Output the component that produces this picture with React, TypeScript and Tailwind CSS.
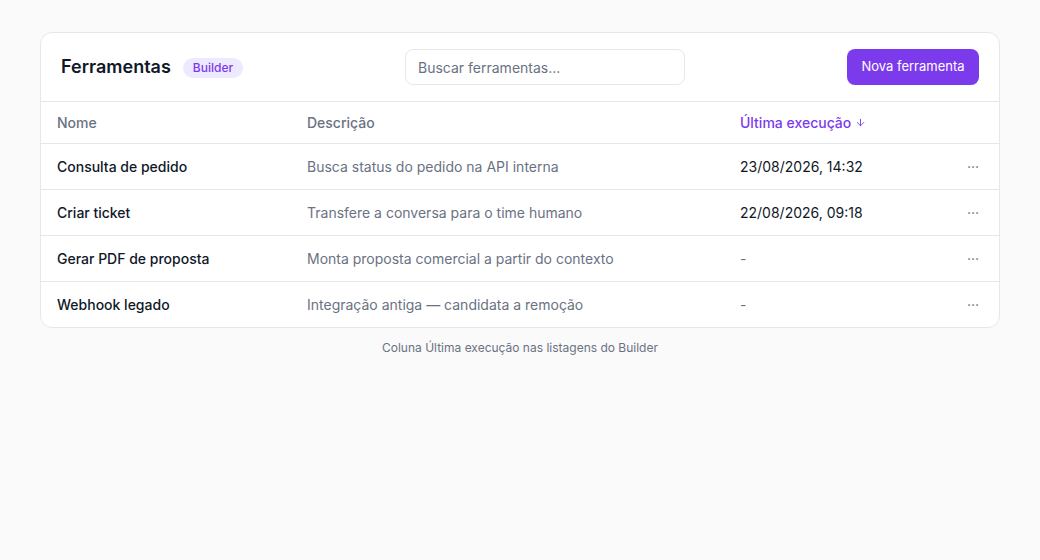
import { ArrowDown } from "lucide-react"

type Tool = {
  name: string
  description: string
  lastRun: string | null
}

const tools: Tool[] = [
  {
    name: "Consulta de pedido",
    description: "Busca status do pedido na API interna",
    lastRun: "23/08/2026, 14:32",
  },
  {
    name: "Criar ticket",
    description: "Transfere a conversa para o time humano",
    lastRun: "22/08/2026, 09:18",
  },
  {
    name: "Gerar PDF de proposta",
    description: "Monta proposta comercial a partir do contexto",
    lastRun: null,
  },
  {
    name: "Webhook legado",
    description: "Integração antiga — candidata a remoção",
    lastRun: null,
  },
]

const cols = "grid grid-cols-[250px_433px_1fr_64px] items-center"

export default function App() {
  return (
    <div className="min-h-screen bg-[#fafafa] px-10 pt-8 font-['Inter',sans-serif] text-gray-900">
      <div className="overflow-hidden rounded-xl border border-gray-200 bg-white">
        <div className="flex items-center justify-between border-b border-gray-200 px-5 py-4">
          <div className="flex items-center gap-3">
            <h1 className="text-lg font-semibold text-gray-900">
              Ferramentas
            </h1>

            <span className="mt-0.5 rounded-full bg-[#ede9fe] px-2.5 py-0.5 text-xs font-medium text-[#7c3aed]">
              Builder
            </span>
          </div>

          <input
            placeholder="Buscar ferramentas..."
            className="h-9 w-[280px] rounded-lg border border-gray-200 bg-white px-3 text-sm text-gray-900 placeholder:text-gray-500 outline-none"
          />

          <button className="h-9 w-[132px] rounded-lg bg-[#7c3aed] text-[13px] text-white">
            Nova ferramenta
          </button>
        </div>

        <div className={`${cols} h-[42px] border-b border-gray-200 text-sm font-medium text-gray-500`}>
          <div className="pl-4">Nome</div>
          <div className="pl-4">Descrição</div>
          <div className="flex items-center gap-1 pl-4 text-[#7c3aed]">
            Última execução
            <ArrowDown size={11} strokeWidth={2} />
          </div>
          <div />
        </div>

        {tools.map((tool, i) => (
          <div
            key={tool.name}
            className={`${cols} text-sm ${
              i < tools.length - 1
                ? "h-[46px] border-b border-gray-200"
                : "h-[45px]"
            }`}
          >
            <div className="pl-4 font-medium text-gray-900">
              {tool.name}
            </div>
            <div className="pl-4 text-gray-500">
              {tool.description}
            </div>
            <div className={`pl-4 ${tool.lastRun ? "text-gray-900" : "text-gray-500"}`}>
              {tool.lastRun ?? "-"}
            </div>
            <div className="pr-5 text-right text-gray-500">···</div>
          </div>
        ))}
      </div>

      <p className="mt-3 text-center text-xs text-gray-500">
        Coluna Última execução nas listagens do Builder
      </p>
    </div>
  )
}
